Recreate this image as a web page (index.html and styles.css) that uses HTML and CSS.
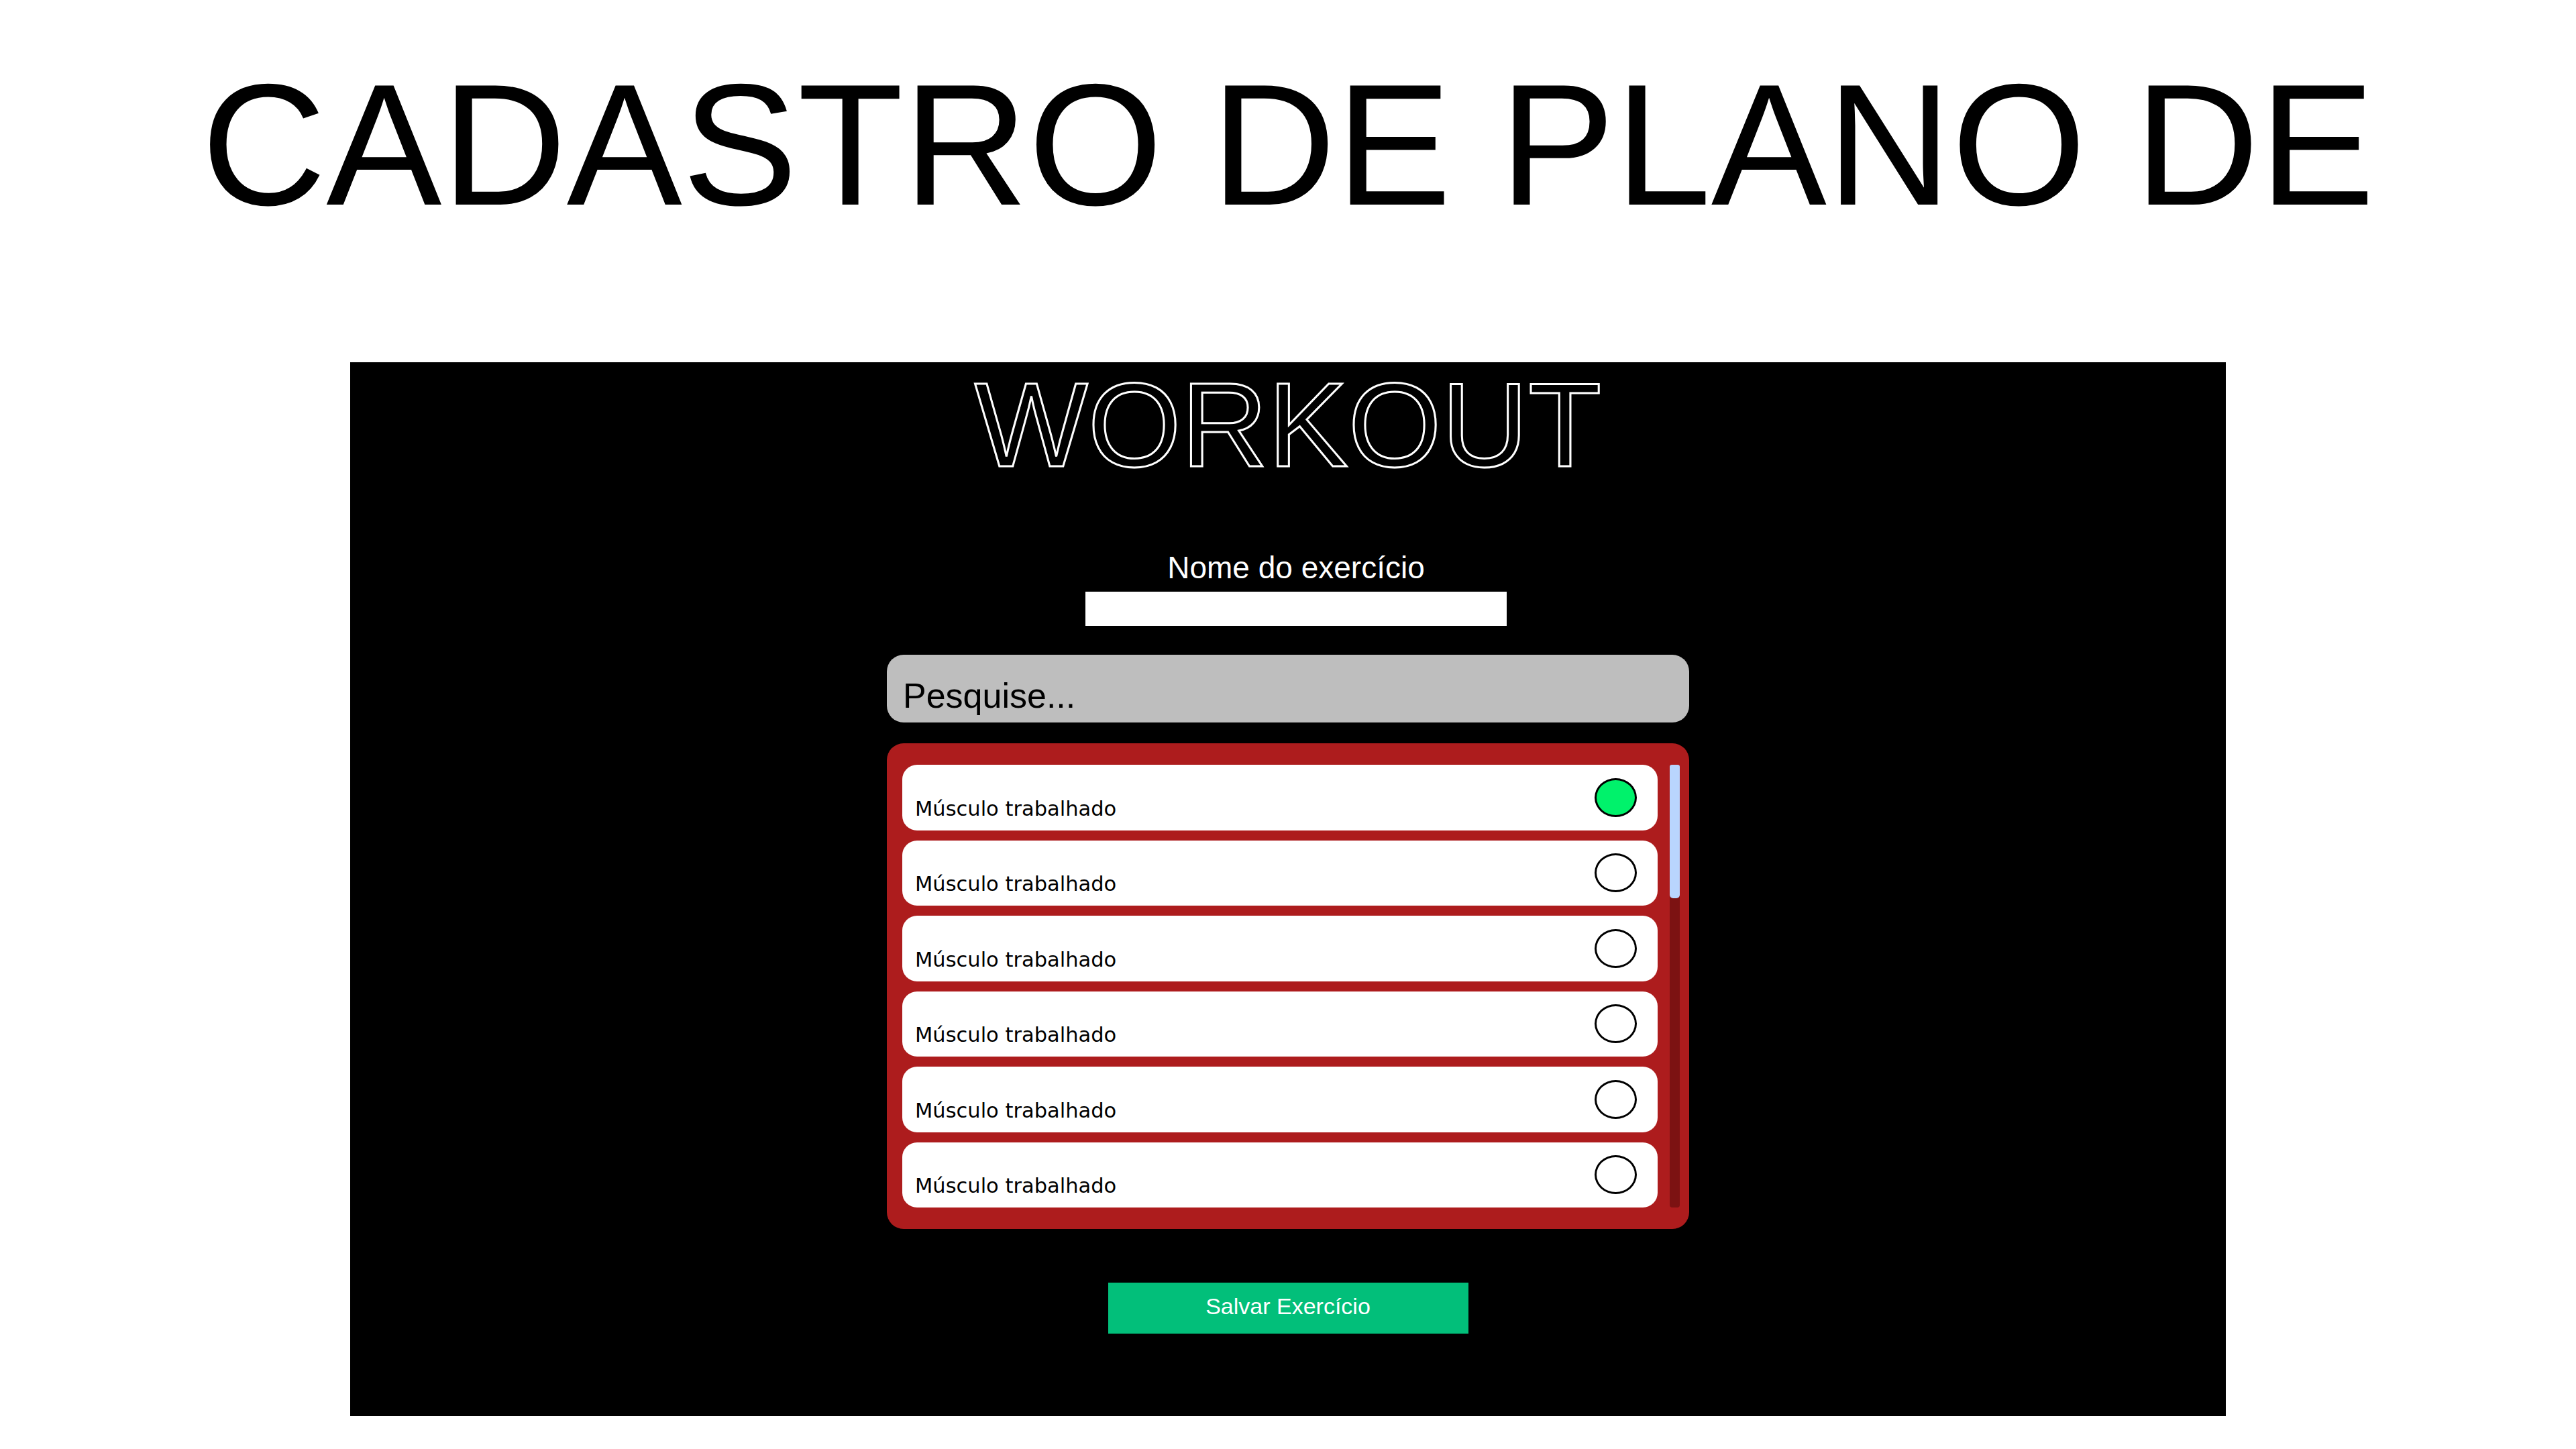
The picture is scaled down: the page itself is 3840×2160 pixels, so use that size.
FILE: index.html
```html
<!DOCTYPE html>
<html lang="pt-BR">
<head>
<meta charset="utf-8">
<title>Cadastro de Plano de Workout</title>
<link rel="stylesheet" href="styles.css">
</head>
<body>
<header class="page-header">
  <h1 class="page-title">CADASTRO DE PLANO DE</h1>
</header>
<main class="panel">
  <h2 class="panel-title">WORKOUT</h2>
  <form class="exercise-form">
    <div class="field">
      <label class="field-label" for="nome">Nome do exercício</label>
      <input class="field-input" id="nome" type="text">
    </div>
    <input class="search" type="text" placeholder="Pesquise...">
    <div class="muscle-box">
      <div class="muscle-list">
        <label class="muscle-item"><span class="muscle-name">Músculo trabalhado</span><input class="muscle-radio" type="radio" name="musculo" checked></label>
        <label class="muscle-item"><span class="muscle-name">Músculo trabalhado</span><input class="muscle-radio" type="radio" name="musculo"></label>
        <label class="muscle-item"><span class="muscle-name">Músculo trabalhado</span><input class="muscle-radio" type="radio" name="musculo"></label>
        <label class="muscle-item"><span class="muscle-name">Músculo trabalhado</span><input class="muscle-radio" type="radio" name="musculo"></label>
        <label class="muscle-item"><span class="muscle-name">Músculo trabalhado</span><input class="muscle-radio" type="radio" name="musculo"></label>
        <label class="muscle-item"><span class="muscle-name">Músculo trabalhado</span><input class="muscle-radio" type="radio" name="musculo"></label>
      </div>
      <div class="scrollbar" aria-hidden="true"><div class="scrollbar-thumb"></div></div>
    </div>
    <button class="save-btn" type="button">Salvar Exercício</button>
  </form>
</main>
</body>
</html>
```
FILE: styles.css
```css
html, body {
  margin: 0;
  padding: 0;
  background: #ffffff;
}

body {
  font-family: "Liberation Sans", Arial, sans-serif;
  color: #000000;
}

.page-header {
  height: 540px;
  box-sizing: border-box;
  padding-top: 88px;
}

.page-title {
  margin: 0;
  font-size: 258px;
  line-height: 256px;
  font-weight: 400;
  text-align: center;
  white-space: nowrap;
}

.panel {
  width: 2796px;
  margin: 0 auto;
  box-sizing: border-box;
  padding: 2px 0 123px;
  background: #000000;
  display: flex;
  flex-direction: column;
  align-items: center;
}

.panel-title {
  margin: 0;
  font-size: 179px;
  line-height: 182px;
  font-weight: 400;
  color: #000000;
  -webkit-text-stroke: 3px #ffffff;
}

.exercise-form {
  width: 100%;
  margin-top: 96px;
  display: flex;
  flex-direction: column;
  align-items: center;
}

.field {
  display: flex;
  flex-direction: column;
  align-items: center;
  margin-left: 24px;
}

.field-label {
  color: #ffffff;
  font-size: 46px;
  line-height: 53px;
}

.field-input {
  margin-top: 9px;
  width: 628px;
  height: 51px;
  box-sizing: border-box;
  border: 0;
  padding: 0;
  background: #ffffff;
  outline: none;
}

.search {
  margin-top: 43px;
  width: 1196px;
  height: 101px;
  box-sizing: border-box;
  border: 0;
  border-radius: 25px;
  padding: 20px 0 0 24px;
  background: #bebebe;
  font-family: "Liberation Sans", Arial, sans-serif;
  font-size: 52px;
  color: #000000;
  outline: none;
}

.search::placeholder {
  color: #000000;
  opacity: 1;
}

.muscle-box {
  margin-top: 31px;
  width: 1196px;
  height: 724px;
  box-sizing: border-box;
  padding: 32px 14px 32px 23px;
  background: #ad1c1d;
  border-radius: 25px;
  display: flex;
  gap: 18px;
}

.muscle-list {
  flex: 1;
  height: 660px;
  overflow: hidden;
  display: flex;
  flex-direction: column;
  gap: 15px;
}

.scrollbar {
  flex: 0 0 15px;
  height: 660px;
  background: #7c1212;
  border-radius: 4px;
}

.scrollbar-thumb {
  height: 199px;
  background: #b9d5fe;
  border-radius: 3px 3px 5px 5px;
}

.muscle-item {
  flex: 0 0 97.5px;
  box-sizing: border-box;
  padding: 0 31px 0 19px;
  background: #ffffff;
  border-radius: 22px;
  display: flex;
  align-items: center;
  justify-content: space-between;
}

.muscle-name {
  align-self: flex-end;
  padding-bottom: 15px;
  font-family: "DejaVu Sans", sans-serif;
  font-size: 30.5px;
  color: #000000;
}

.muscle-radio {
  appearance: none;
  -webkit-appearance: none;
  margin: 0;
  width: 63px;
  height: 58px;
  box-sizing: border-box;
  border: 3px solid #000000;
  border-radius: 50%;
  background: #ffffff;
}

.muscle-radio:checked {
  background: #00f26b;
}

.save-btn {
  margin-top: 80px;
  width: 537px;
  height: 76px;
  box-sizing: border-box;
  border: 0;
  padding: 0 0 6px;
  background: #02bf7a;
  color: #ffffff;
  font-family: "Liberation Sans", Arial, sans-serif;
  font-size: 34px;
}
```
